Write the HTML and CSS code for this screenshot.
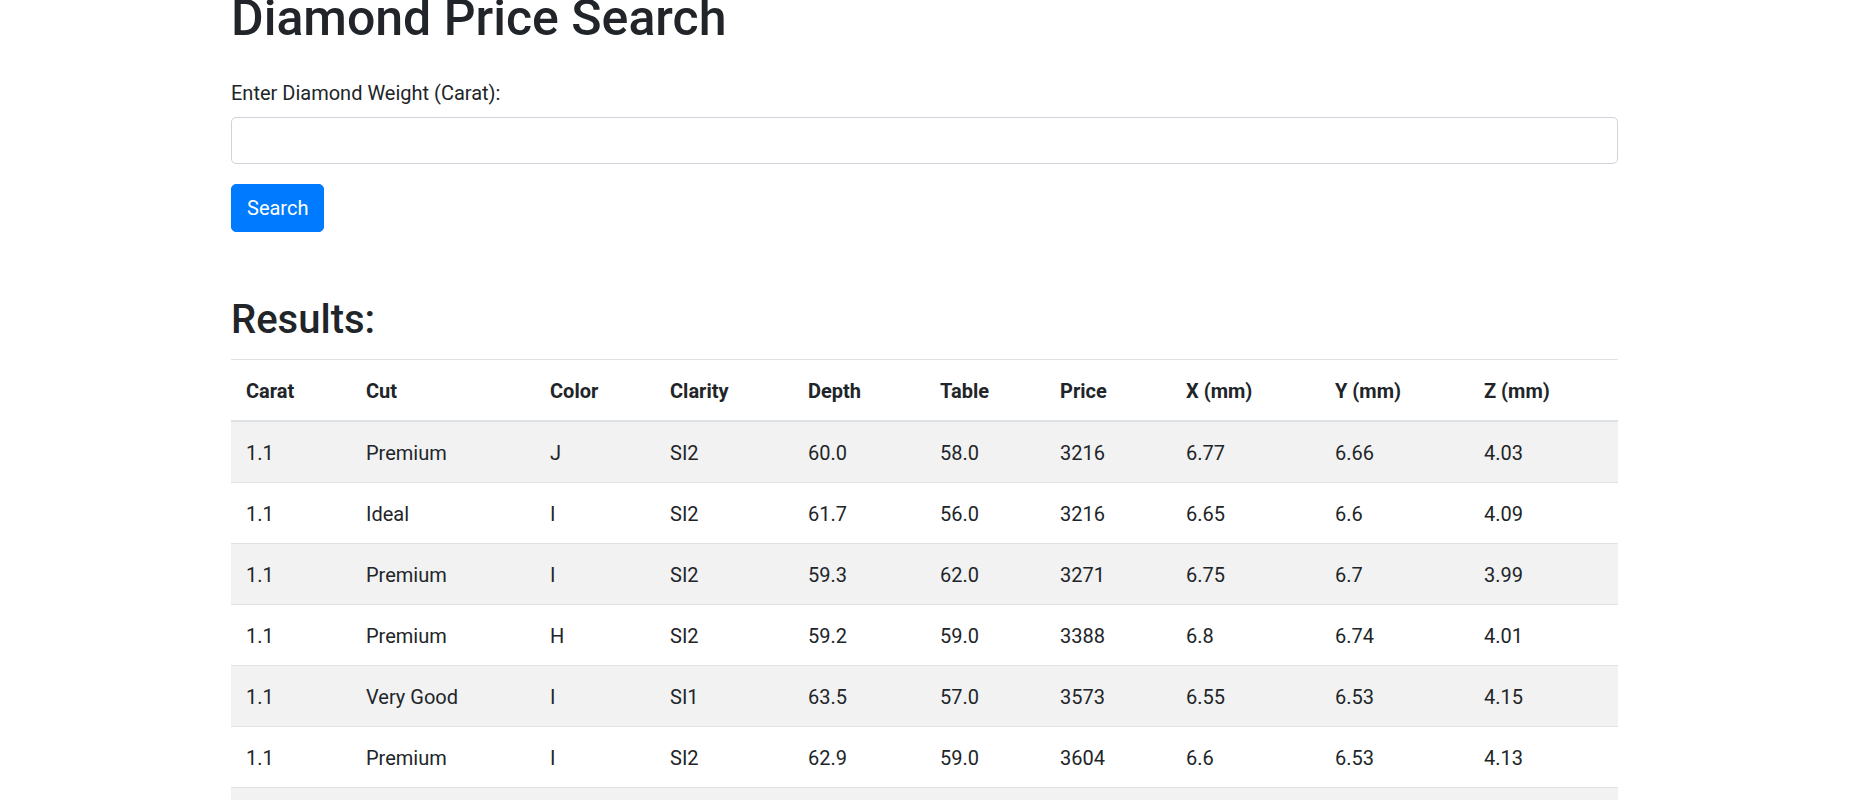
FILE: index.html
```html
<!DOCTYPE html>
<html lang="en">
<head>
<meta charset="utf-8">
<title>Diamond Price Search</title>
<link rel="stylesheet" href="styles.css">
</head>
<body>
<div class="container">
  <h1 class="title">Diamond Price Search</h1>
  <form class="search-form">
    <div class="form-group">
      <label class="form-label" for="carat">Enter Diamond Weight (Carat):</label>
      <input class="form-control" type="text" id="carat">
    </div>
    <button class="btn-primary" type="button">Search</button>
  </form>
  <h2 class="results-title">Results:</h2>
  <table class="table">
    <colgroup>
      <col class="c-carat"><col class="c-cut"><col class="c-color"><col class="c-clarity"><col class="c-depth">
      <col class="c-table"><col class="c-price"><col class="c-x"><col class="c-y"><col class="c-z">
    </colgroup>
    <thead>
      <tr><th>Carat</th><th>Cut</th><th>Color</th><th>Clarity</th><th>Depth</th><th>Table</th><th>Price</th><th>X (mm)</th><th>Y (mm)</th><th>Z (mm)</th></tr>
    </thead>
    <tbody>
      <tr><td>1.1</td><td>Premium</td><td>J</td><td>SI2</td><td>60.0</td><td>58.0</td><td>3216</td><td>6.77</td><td>6.66</td><td>4.03</td></tr>
      <tr><td>1.1</td><td>Ideal</td><td>I</td><td>SI2</td><td>61.7</td><td>56.0</td><td>3216</td><td>6.65</td><td>6.6</td><td>4.09</td></tr>
      <tr><td>1.1</td><td>Premium</td><td>I</td><td>SI2</td><td>59.3</td><td>62.0</td><td>3271</td><td>6.75</td><td>6.7</td><td>3.99</td></tr>
      <tr><td>1.1</td><td>Premium</td><td>H</td><td>SI2</td><td>59.2</td><td>59.0</td><td>3388</td><td>6.8</td><td>6.74</td><td>4.01</td></tr>
      <tr><td>1.1</td><td>Very Good</td><td>I</td><td>SI1</td><td>63.5</td><td>57.0</td><td>3573</td><td>6.55</td><td>6.53</td><td>4.15</td></tr>
      <tr><td>1.1</td><td>Premium</td><td>I</td><td>SI2</td><td>62.9</td><td>59.0</td><td>3604</td><td>6.6</td><td>6.53</td><td>4.13</td></tr>
      <tr><td>1.1</td><td>Ideal</td><td>H</td><td>SI2</td><td>61.9</td><td>57.0</td><td>3696</td><td>6.63</td><td>6.66</td><td>4.11</td></tr>
    </tbody>
  </table>
</div>
</body>
</html>
```
FILE: styles.css
```css
html { overflow: hidden; }
body {
  margin: 0;
  font-family: Roboto, "Liberation Sans", Arial, sans-serif;
  font-size: 20px;
  line-height: 30px;
  color: #212529;
  background: #fff;
}
.container {
  width: 1387px;
  margin: -12px 0 0 231px;
}
.title {
  margin: 0 0 29.5px;
  font-size: 50px;
  line-height: 60px;
  font-weight: 500;
}
.search-form { margin: 0; }
.form-group { margin-bottom: 20px; }
.form-label {
  display: inline-block;
  margin-bottom: 9px;
}
.form-control {
  display: block;
  box-sizing: border-box;
  width: 100%;
  height: 47.5px;
  padding: 7.5px 15px;
  font: inherit;
  color: #495057;
  background: #fff;
  border: 1px solid #ced4da;
  border-radius: 5px;
  outline: none;
}
.btn-primary {
  display: inline-block;
  box-sizing: border-box;
  height: 47.5px;
  padding: 7.5px 15px;
  font: inherit;
  line-height: 30px;
  color: #fff;
  background: #007bff;
  border: 1px solid #007bff;
  border-radius: 5px;
  vertical-align: top;
}
.results-title {
  margin: 64px 0 15.5px;
  font-size: 40px;
  line-height: 48px;
  font-weight: 500;
}
.table {
  width: 100%;
  table-layout: fixed;
  border-collapse: collapse;
}
.table th, .table td {
  padding: 16px 15px 14px;
  text-align: left;
  border-top: 1px solid #dee2e6;
  white-space: nowrap;
}
.table th { font-weight: 700; }
.table thead th { border-bottom: 2px solid #dee2e6; }
.table tbody tr:nth-child(odd) { background: #f2f2f2; }
.c-carat { width: 120px; }
.c-cut { width: 184px; }
.c-color { width: 120px; }
.c-clarity { width: 138px; }
.c-depth { width: 132px; }
.c-table { width: 120px; }
.c-price { width: 126px; }
.c-x { width: 149px; }
.c-y { width: 149px; }
.c-z { width: 149px; }
```
